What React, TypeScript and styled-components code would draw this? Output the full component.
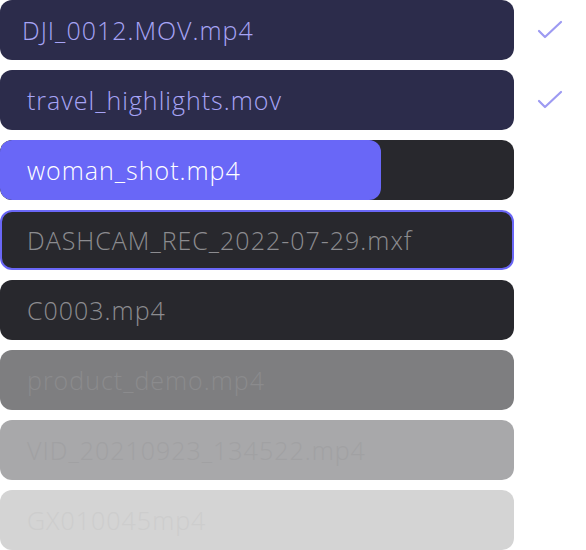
import React from "react";
import styled, { createGlobalStyle } from "styled-components";

const Global = createGlobalStyle`
  html, body { margin: 0; padding: 0; background: #ffffff; }
  body { font-family: "Open Sans", "Noto Sans", sans-serif; }
`;

type Variant = "done" | "progress" | "selected" | "queued" | "faded1" | "faded2" | "faded3";

const palette: Record<Variant, { bg: string; fg: string; border?: string }> = {
  done: { bg: "#2c2c4b", fg: "#a7a4f6" },
  progress: { bg: "#28282d", fg: "#ffffff" },
  selected: { bg: "#28282d", fg: "#8c8c90", border: "#6a67f7" },
  queued: { bg: "#28282d", fg: "#8c8c90" },
  faded1: { bg: "#7e7e80", fg: "#8b8b8d" },
  faded2: { bg: "#a8a8aa", fg: "#a1a1a3" },
  faded3: { bg: "#d4d4d4", fg: "#cdcdcd" },
};

const List = styled.div`
  display: flex;
  flex-direction: column;
  gap: 10px;
  width: 586px;
`;

const Line = styled.div`
  display: flex;
  align-items: center;
`;

const Bar = styled.div<{ $v: Variant; $indent: number }>`
  position: relative;
  box-sizing: border-box;
  width: 514px;
  height: 60px;
  border-radius: 12px;
  overflow: hidden;
  background: ${(p) => palette[p.$v].bg};
  border: ${(p) => (palette[p.$v].border ? `2px solid ${palette[p.$v].border}` : "none")};
  display: flex;
  align-items: center;
  padding-left: ${(p) => p.$indent - (palette[p.$v].border ? 2 : 0)}px;
`;

const Fill = styled.div`
  position: absolute;
  left: 0;
  top: 0;
  bottom: 0;
  background: #6967f7;
  border-radius: 12px;
`;

const Name = styled.span<{ $v: Variant }>`
  position: relative;
  font-size: 25px;
  font-weight: 350;
  line-height: 1;
  color: ${(p) => palette[p.$v].fg};
  white-space: nowrap;
  letter-spacing: 1px;
`;

const CheckSlot = styled.div`
  width: 72px;
  height: 60px;
  display: flex;
  align-items: center;
  justify-content: center;
`;

const Check = () => (
  <svg width="26" height="20" viewBox="0 0 26 20" fill="none">
    <path d="M2 11 L8 17 L24 2" stroke="#9d9af2" strokeWidth="2.2" strokeLinecap="round" strokeLinejoin="round" />
  </svg>
);

const files: { name: string; v: Variant; indent: number; check?: boolean; progress?: number }[] = [
  { name: "DJI_0012.MOV.mp4", v: "done", indent: 22, check: true },
  { name: "travel_highlights.mov", v: "done", indent: 27, check: true },
  { name: "woman_shot.mp4", v: "progress", indent: 27, progress: 381 },
  { name: "DASHCAM_REC_2022-07-29.mxf", v: "selected", indent: 27 },
  { name: "C0003.mp4", v: "queued", indent: 27 },
  { name: "product_demo.mp4", v: "faded1", indent: 27 },
  { name: "VID_20210923_134522.mp4", v: "faded2", indent: 27 },
  { name: "GX010045mp4", v: "faded3", indent: 27 },
];

export default function App() {
  return (
    <>
      <Global />
      <List>
        {files.map((f) => (
          <Line key={f.name}>
            <Bar $v={f.v} $indent={f.indent}>
              {f.progress !== undefined && <Fill style={{ width: f.progress }} />}
              <Name $v={f.v}>{f.name}</Name>
            </Bar>
            {f.check && (
              <CheckSlot>
                <Check />
              </CheckSlot>
            )}
          </Line>
        ))}
      </List>
    </>
  );
}
